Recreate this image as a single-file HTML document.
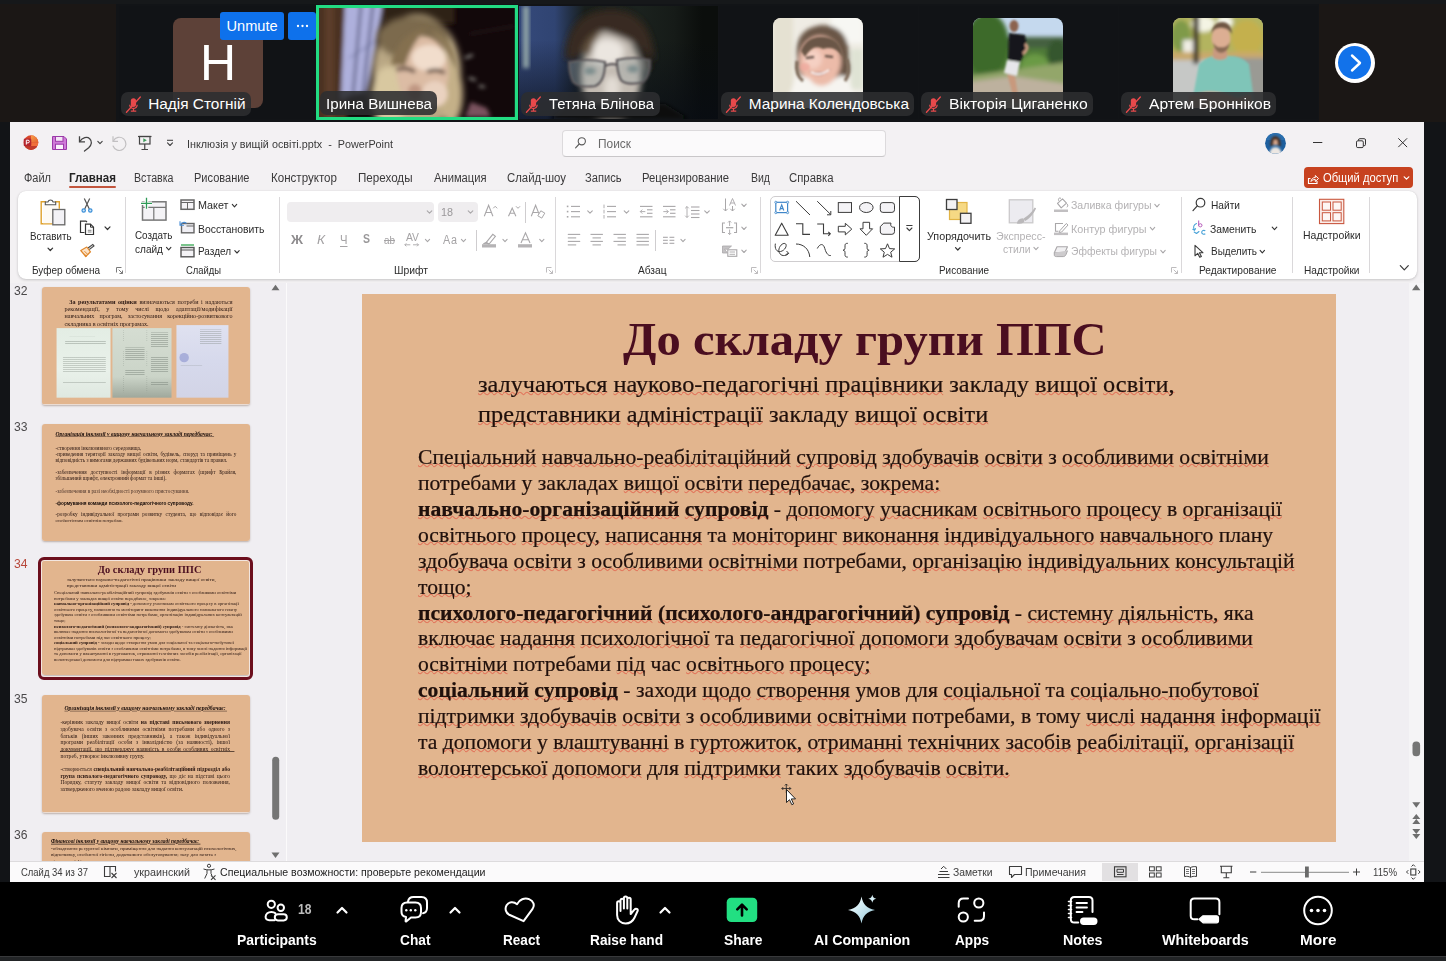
<!DOCTYPE html>
<html lang="uk"><head><meta charset="utf-8"><title>Zoom Meeting</title>
<style>
*{box-sizing:border-box;margin:0;padding:0}
html,body{width:1446px;height:961px;overflow:hidden;background:#121417}
body{position:relative;font-family:"Liberation Sans",sans-serif;color:#262626}
.abs,.L{position:absolute}
.L{white-space:pre;transform-origin:0 50%;line-height:1.2}
.serif{font-family:"Liberation Serif",serif}
svg{position:absolute;overflow:visible}
/* zoom strip */
#warmL{left:0;top:4px;width:116px;height:118px;background:#1b1715}
#warmR{left:1319px;top:4px;width:127px;height:118px;background:#1b1715}
.tile{position:absolute;top:6px;width:199px;height:113px;background:#111316;overflow:hidden}
.av{position:absolute;left:54.5px;top:11.5px;width:90px;height:90px;border-radius:8px;overflow:hidden}
.pill{position:absolute;height:24px;top:86px;border-radius:7px;background:rgba(44,46,48,.88)}
.nm{color:#fff;font-size:15.4px}
/* ppt */
#ppt{left:10px;top:121.5px;width:1414px;height:760px;background:#f3f1f3;overflow:hidden}
#ribbon{left:7.5px;top:69.5px;width:1399.5px;height:87.5px;background:#ffffff;border-radius:8px;box-shadow:0 1px 3px rgba(0,0,0,.18),0 0 1px rgba(0,0,0,.12)}
.gsep{position:absolute;top:77px;height:72px;width:1px;background:#dcdadc}
#work{left:0;top:161px;width:1414px;height:579px;background:#f0eef2}
#status{left:0;top:739.5px;width:1414px;height:20.5px;background:#fbfafb;border-top:1px solid #dddbdd}
/* slide */
.slide{position:absolute;background:#e2b58e;overflow:hidden}
.stitle{position:absolute;font-family:"Liberation Serif",serif;font-weight:700;color:#4a0e20;white-space:pre}
.stext{position:absolute;font-family:"Liberation Serif",serif;color:#20100c;white-space:pre;-webkit-text-stroke:.22px #20100c}
.stext b{font-weight:700}
u.w{text-decoration:underline wavy rgba(226,52,40,.5);text-decoration-thickness:.45px;text-underline-offset:-.6px;text-decoration-skip-ink:none}
/* toolbar */
#tb{left:0;top:881.5px;width:1446px;height:74px;background:#000}
#tbb{left:0;top:955.5px;width:1446px;height:5.5px;background:#222426;border-top:1px solid #38393b}
.tl{color:#fff;font-weight:700;font-size:14px}
svg.ph{overflow:hidden}
.th{position:absolute;left:31.500px;width:208.500px;height:117.300px;border-radius:3px;overflow:hidden;box-shadow:0 1px 2px rgba(90,60,40,.35)}
.tf{left:0;top:0;width:974px;height:548px;transform:scale(.21407);transform-origin:0 0}
.th .stext{color:#2a1712;-webkit-text-stroke:0}
.doc{overflow:hidden}
.doc i{position:absolute;display:block;height:8px;background:repeating-linear-gradient(180deg,#6b756c 0 3px,transparent 3px 9px);opacity:.3}
.stext.j .jl{display:block;text-align:justify;text-align-last:justify;white-space:normal}

</style></head>
<body>
<div class="abs" id="topband" style="left:0;top:0;width:1446px;height:4px;background:#16181a"></div>
<div class="abs" id="warmL"></div><div class="abs" id="warmR"></div>
<svg width="0" height="0" style="left:0;top:0"><defs>
<filter id="b1" x="-20%" y="-20%" width="140%" height="140%"><feGaussianBlur stdDeviation="1"/></filter>
<filter id="b2" x="-20%" y="-20%" width="140%" height="140%"><feGaussianBlur stdDeviation="2"/></filter>
<filter id="b3" x="-30%" y="-30%" width="160%" height="160%"><feGaussianBlur stdDeviation="3.2"/></filter>
<filter id="b5" x="-30%" y="-30%" width="160%" height="160%"><feGaussianBlur stdDeviation="5"/></filter>
<symbol id="mic" viewBox="0 0 17 18"><g fill="#e8494b"><rect x="6" y="2.200" width="5.400" height="9" rx="2.700"/><path d="M4.200 9h1.300c0 1.900 1.400 3.200 3.200 3.200s3.200-1.300 3.200-3.200h1.300c0 2.400-1.600 4.100-3.800 4.400v1.500h2.200v1.300H6v-1.300h2.100v-1.500C5.900 13.100 4.200 11.400 4.200 9z"/></g><path d="M1.500 16.800L15.800 1" stroke="#e8494b" stroke-width="1.400" stroke-linecap="round"/></symbol>
</defs></svg>
<!-- tile 1 : letter avatar -->
<div class="tile" style="left:118.5px">
  <div class="av" style="background:#5d4138"></div>
  <div class="abs" style="left:54.500px;top:11.500px;width:90px;height:90px;color:#fff;font-size:50px;line-height:90px;text-align:center">H</div>
  <div class="pill" style="left:2.5px;width:129.500px"></div>
  <svg style="left:6.500px;top:89.500px" width="16.500" height="17.500"><use href="#mic"/></svg>
</div>
<div class="abs" style="left:220px;top:12.200px;width:63.600px;height:27.800px;background:#0e71eb;border-radius:3px"></div>
<div class="abs" style="left:288px;top:12.200px;width:27.600px;height:27.800px;background:#0e71eb;border-radius:3px"></div>
<svg style="left:295.500px;top:23.700px" width="13" height="4" viewBox="0 0 13 4"><g fill="#fff"><circle cx="2" cy="2" r="1.150"/><circle cx="6.500" cy="2" r="1.150"/><circle cx="11" cy="2" r="1.150"/></g></svg>
<!-- tile 2 : active speaker video -->
<div class="tile" style="left:316px;top:4.800px;width:202.200px;height:115.400px;background:#22dc83">
 <svg class="ph" style="left:3.200px;top:3.200px" width="195.800" height="109" viewBox="0 0 196 109">
  <rect width="196" height="109" fill="#12080a"/>
  <g filter="url(#b2)">
   <rect x="-4" y="-4" width="32" height="120" fill="#4b3122"/>
   <rect x="6" y="-4" width="9" height="120" fill="#5b3d2a"/>
   <path d="M26 -4L68 -4L62 30L50 84L22 90Z" fill="#aeb0dc"/>
   <path d="M30 50L64 28" stroke="#8488b4" stroke-width="1.500"/>
   <path d="M42 -4L34 88M54 -4L44 86" stroke="#56587e" stroke-width="2.500"/>
   <path d="M66 -4L56 56L48 90" stroke="#3e302a" stroke-width="5"/>
   <rect x="66" y="-4" width="70" height="20" fill="#2e2018"/>
   <path d="M150 26L196 18" stroke="#3a2a2c" stroke-width="1"/>
  </g>
  <g filter="url(#b3)">
   <ellipse cx="98" cy="64" rx="44" ry="58" fill="#b9a784"/>
   <ellipse cx="94" cy="30" rx="36" ry="22" fill="#7c6a4e"/>
   <ellipse cx="70" cy="88" rx="18" ry="30" fill="#d8c8a0"/>
   <ellipse cx="132" cy="86" rx="12" ry="30" fill="#c4b088"/>
  </g>
  <g filter="url(#b2)">
   <ellipse cx="104" cy="64" rx="26" ry="36" fill="#dcbca4"/>
   <ellipse cx="110" cy="50" rx="17" ry="13" fill="#f1ddcc"/>
   <ellipse cx="116" cy="86" rx="13" ry="13" fill="#ead2c0"/>
   <path d="M78 62Q88 58 96 64M108 64Q118 60 126 65" stroke="#564236" stroke-width="3.500" fill="none"/>
   <ellipse cx="96" cy="84" rx="7" ry="8" fill="#bf9682"/>
   <path d="M72 56Q80 24 108 20Q92 36 86 58Z" fill="#84704f"/>
   <path d="M112 22Q136 30 138 62Q128 40 112 22Z" fill="#8e7a58"/>
   <path d="M146 109L152 94L168 100L172 109Z" fill="#7a525e"/>
   <path d="M146 50l8-3M150 70l7 2M160 78l6 1" stroke="#a8a8a0" stroke-width="2"/>
  </g>
 </svg>
 <div class="pill" style="left:4.300px;top:86.600px;width:116.700px"></div>
</div>
<!-- tile 3 : video -->
<div class="tile" style="left:518.5px;background:linear-gradient(180deg,rgba(8,12,20,0) 30%,rgba(8,12,20,.7) 100%),linear-gradient(90deg,#35497a 0%,#304472 18%,#222f44 26%,#191f1c 33%,#1b221e 60%,#161b18 78%,#0b0e0c 92%)">
 <svg class="ph" style="left:0;top:0" width="199" height="113" viewBox="0 0 199 113">
  <rect x="4" y="0" width="6" height="62" fill="#8fa3a6" filter="url(#b2)"/>
  <g filter="url(#b3)">
   <path d="M46 52Q48 4 92 3Q134 4 136 56Q120 36 86 24Q64 30 56 54Z" fill="#33271e"/>
   <ellipse cx="92" cy="70" rx="30" ry="46" fill="#c3bbb2"/>
   <ellipse cx="88" cy="46" rx="17" ry="13" fill="#ebe6e0"/>
   <ellipse cx="93" cy="82" rx="8" ry="12" fill="#e2dcd4"/>
   <path d="M48 50Q52 8 92 6Q130 8 134 52Q116 34 84 25Q64 30 60 52Z" fill="#372a20"/>
   <path d="M62 46Q68 28 84 24Q74 36 72 50Z" fill="#65523f"/>
   <path d="M118 40Q132 50 132 64L124 62Z" fill="#2c211a"/>
  </g>
  <g filter="url(#b1)" fill="none" stroke="#5a5558" stroke-width="2.200">
   <path d="M50 56Q68 52 86 56Q86 76 76 80Q60 82 54 76Q50 68 50 56Z" fill="rgba(160,172,172,.38)"/>
   <path d="M98 54Q116 50 131 54Q132 70 124 76Q108 80 102 74Q98 66 98 54Z" fill="rgba(160,172,172,.38)"/>
   <path d="M86 60Q92 57 98 59"/>
  </g>
  <g filter="url(#b2)"><ellipse cx="71" cy="65" rx="6" ry="3.500" fill="#78898a"/><ellipse cx="114" cy="63" rx="6" ry="3.500" fill="#78898a"/>
  <path d="M30 113L50 98L146 98L170 113Z" fill="#0e110f"/></g>
 </svg>
 <div class="pill" style="left:2.900px;width:138.600px"></div>
 <svg style="left:6.500px;top:89.500px" width="16.500" height="17.500"><use href="#mic"/></svg>
</div>
<!-- tile 4 -->
<div class="tile" style="left:718.5px">
 <div class="av"><svg class="ph" style="left:0;top:0" width="90" height="90" viewBox="0 0 90 90">
  <rect width="90" height="90" fill="#efece4"/>
  <g filter="url(#b2)" transform="translate(0,-9)">
   <rect x="0" y="0" width="20" height="110" fill="#e5e1d2"/><rect x="58" y="0" width="32" height="34" fill="#f7f7f3"/>
   <rect x="78" y="40" width="12" height="40" fill="#dfe3d4"/>
   <path d="M24 50Q20 20 48 16Q78 16 76 52Q80 66 70 70L30 68Q22 62 24 50Z" fill="#6a5646"/>
   <ellipse cx="47" cy="52" rx="21" ry="25" fill="#ecbba9"/>
   <ellipse cx="40" cy="50" rx="9" ry="10" fill="#f5d0c3"/>
   <path d="M10 104L22 70Q34 64 40 74Q52 82 62 70Q70 62 76 72L88 104Z" fill="#f6f4f0"/>
  </g>
  <g filter="url(#b1)" transform="translate(0,-9)"><path d="M28 42Q34 26 52 28Q68 30 70 48Q62 36 50 40Q40 34 32 48Z" fill="#6b5746"/>
   <path d="M24 52Q22 66 30 72M74 50Q78 64 72 72" stroke="#7a6655" stroke-width="3" fill="none"/>
   <path d="M36 62Q46 72 58 60Q46 66 36 62Z" fill="#a45c56"/><path d="M38 63Q46 68 56 61" stroke="#fff" stroke-width="1.600" fill="none"/>
   <path d="M33 49l8-1M52 47l8 1" stroke="#54423a" stroke-width="2.200"/>
   <ellipse cx="32" cy="58" rx="5" ry="4" fill="#f0a89c" opacity=".7"/></g>
 </svg></div>
 <div class="pill" style="left:2.100px;width:193.300px"></div>
 <svg style="left:6.500px;top:89.500px" width="16.500" height="17.500"><use href="#mic"/></svg>
</div>
<!-- tile 5 -->
<div class="tile" style="left:918.5px">
 <div class="av"><svg class="ph" style="left:0;top:0" width="90" height="90" viewBox="0 0 90 90">
  <rect width="90" height="90" fill="#c5d9ee"/>
  <g filter="url(#b2)">
   <rect x="-4" y="19" width="98" height="14" fill="#44603f"/>
   <rect x="-4" y="30" width="98" height="30" fill="#4f7a37"/>
   <ellipse cx="14" cy="26" rx="22" ry="32" fill="#3c6a2b"/>
   <ellipse cx="62" cy="48" rx="14" ry="12" fill="#6b9a45"/>
   <ellipse cx="84" cy="36" rx="10" ry="14" fill="#36572f"/>
   <path d="M-4 58L94 44L94 94L-4 94Z" fill="#93a66b"/>
   <path d="M-4 64L40 58L94 66L94 94L-4 94Z" fill="#bdb19e"/>
  </g>
  <g filter="url(#b1)">
   <ellipse cx="41" cy="8" rx="4.500" ry="6" fill="#8c6450"/>
   <path d="M36 15L52 17L54 30L47 44L35 42Z" fill="#13141a"/>
   <path d="M52 26Q57 30 50 36" stroke="#c8997f" stroke-width="3" fill="none"/>
   <path d="M34 42L47 44L44 58L31 55Z" fill="#e6e6ea"/>
   <path d="M34 56L42 58L46 84L41 84L38 70Z" fill="#c8997d"/>
  </g>
 </svg></div>
 <div class="pill" style="left:2.100px;width:172.400px"></div>
 <svg style="left:6.500px;top:89.500px" width="16.500" height="17.500"><use href="#mic"/></svg>
</div>
<!-- tile 6 -->
<div class="tile" style="left:1118.5px">
 <div class="av"><svg class="ph" style="left:0;top:0" width="90" height="90" viewBox="0 0 90 90">
  <rect width="90" height="90" fill="#c6c9a0"/>
  <g filter="url(#b2)">
   <rect x="-4" y="-4" width="98" height="40" fill="#b3b45e"/>
   <ellipse cx="30" cy="6" rx="12" ry="8" fill="#f4f4e4"/><ellipse cx="52" cy="4" rx="8" ry="6" fill="#f8f8ee"/>
   <ellipse cx="74" cy="20" rx="16" ry="18" fill="#c4b04e"/><ellipse cx="8" cy="18" rx="10" ry="16" fill="#7f9a48"/>
   <rect x="10" y="22" width="14" height="12" fill="#f0eee4"/>
   <rect x="-4" y="34" width="98" height="8" fill="#c9a96c"/>
   <rect x="-4" y="42" width="40" height="52" fill="#c6c8c6"/>
   <rect x="60" y="40" width="34" height="54" fill="#9a9a94"/>
   <rect x="20" y="-4" width="6" height="50" fill="#3f372b"/>
  </g>
  <g filter="url(#b1)">
   <path d="M18 90L26 46Q36 36 48 38Q68 36 76 46L82 90Z" fill="#7fc5b8"/>
   <path d="M40 30h14v10q-7 4-14 0z" fill="#c99a80"/>
   <ellipse cx="48" cy="20" rx="9.500" ry="12" fill="#dcae93"/>
   <path d="M38 16Q40 4 49 4Q58 4 59 16Q54 9 48 10Q42 9 38 16Z" fill="#6f5744"/>
   <path d="M40 24Q42 35 48 35Q55 35 57 24Q54 30 48 29Q43 30 40 24Z" fill="#8a6a54"/>
   <path d="M16 78Q40 68 64 80L78 76L80 90L16 90Z" fill="#d5a88e"/>
  </g>
 </svg></div>
 <div class="pill" style="left:2.100px;width:155.200px"></div>
 <svg style="left:6.500px;top:89.500px" width="16.500" height="17.500"><use href="#mic"/></svg>
</div>
<!-- next page arrow -->
<div class="abs" style="left:1334.700px;top:42.500px;width:40px;height:40px;border-radius:50%;background:#fff"></div>
<div class="abs" style="left:1338.200px;top:46px;width:33px;height:33px;border-radius:50%;background:#1272ea"></div>
<svg style="left:1349.500px;top:53.500px" width="12" height="18" viewBox="0 0 12 18"><path d="M2 1.500L10 9L2 16.500" fill="none" stroke="#fff" stroke-width="2.400" stroke-linecap="round" stroke-linejoin="round"/></svg>

<div class="abs" id="ppt">
  <div class="abs" id="work"></div>
  <div class="abs" id="ribbon"></div>
  <div class="abs" id="tpane" style="left:0;top:161.500px;width:276px;height:578.800px;overflow:hidden">
 <!-- coordinates inside: pane-relative; thumb x = 31.5 -->
 <div class="th" style="top:4.400px"><div class="slide tf">
   <div class="stext" style="left:105px;top:52px;width:785px;font-size:28.500px;line-height:34.500px;white-space:normal;text-align:justify;text-indent:22px"><b>За результатами оцінки</b> визначаються потреби і надаються рекомендації, у тому числі щодо адаптації/модифікації навчальних програм, застосування корекційно-розвиткового складника в освітніх програмах.</div>
   <div class="abs doc" style="left:68px;top:192px;width:252px;height:325px;background:linear-gradient(180deg,#e3ede4,#e9f1ea 60%,#dfe8e0)"><i style="left:60px;top:30px;width:120px"></i><i style="left:40px;top:60px;width:190px;height:24px;opacity:.35"></i><i style="left:30px;top:110px;width:200px;height:150px;opacity:.3"></i></div>
   <div class="abs doc" style="left:329px;top:192px;width:276px;height:325px;background:linear-gradient(180deg,#d5ddd2,#cbd4c8 70%,#9fa89c)"><i style="left:180px;top:20px;width:80px;height:250px;opacity:.4"></i><i style="left:60px;top:90px;width:90px;height:130px;opacity:.4"></i><i style="left:50px;top:10px;width:2px;height:290px;opacity:.5"></i><i style="left:160px;top:10px;width:2px;height:290px;opacity:.5"></i></div>
   <div class="abs doc" style="left:628px;top:178px;width:243px;height:339px;background:linear-gradient(180deg,#dfe1f0,#d6d9ec 50%,#d2d4e6)"><i style="left:110px;top:20px;width:100px;height:70px;opacity:.3"></i><i style="left:14px;top:130px;width:44px;height:44px;border-radius:50%;background:#7a84c8;opacity:.5"></i><i style="left:20px;top:186px;width:100px;height:3px;opacity:.3"></i></div>
 </div></div>
 <div class="th" style="top:140.500px"><div class="slide tf">
   <div class="stext" style="left:63px;top:30px;font-size:25px;line-height:34px;font-style:italic;font-weight:700;text-decoration:underline;color:#1a0d0a;transform:scaleX(1.045);transform-origin:0 0">Організація інклюзії у вищому навчальному закладі передбачає: </div>
   <div class="stext j" style="left:63px;top:99px;width:845px;font-size:24.500px;line-height:27.500px">-створення інклюзивного середовища,<br><span class="jl">-приведення території закладу вищої освіти, будівель, споруд та приміщень у</span><span style="font-size:24.300px">відповідність з вимогами державних будівельних норм, стандартів та правил.</span></div>
   <div class="stext j" style="left:63px;top:211px;width:845px;font-size:24.500px;line-height:27.500px"><span class="jl">-забезпечення доступності інформації в різних форматах (шрифт Брайля,</span>збільшений шрифт, електронний формат та інші).</div>
   <div class="stext" style="left:63px;top:298px;font-size:24.300px;line-height:27px;color:#4a332a">-забезпечення в разі необхідності розумного пристосування.</div>
   <div class="stext" style="left:63px;top:356px;font-size:21.800px;line-height:28px;font-weight:700;font-family:'Liberation Sans',sans-serif;color:#120806">-формування команди психолого-педагогічного супроводу.</div>
   <div class="stext j" style="left:63px;top:411px;width:845px;font-size:24.500px;line-height:26.500px"><span class="jl">-розробку індивідуальної програми розвитку студента, що відповідає його</span><span style="font-size:22.200px">особистісним освітнім потребам.</span></div>
 </div></div>
 <div class="th sel" style="top:274.500px"><div class="slide tf"><div class="stitle" style="left:260.5px;top:22.6px;font-size:46.6px;line-height:58px;transform:scaleX(1.043);transform-origin:0 0">До складу групи ППС</div><div class="stext" style="left:116px;top:85px;font-size:23.4px;line-height:29.2px;transform:scaleX(1.0385);transform-origin:0 0">залучаються науково-педагогічні працівники закладу вищої освіти,<br>представники адміністрації закладу вищої освіти</div><div class="stext" style="left:56px;top:150.6px;font-size:20.85px;line-height:25.93px;transform:scaleX(1.0384);transform-origin:0 0">Спеціальний навчально-реабілітаційний супровід здобувачів освіти з особливими освітніми<br>потребами у закладах вищої освіти передбачає, зокрема:<br><b>навчально-організаційний супровід</b> - допомогу учасникам освітнього процесу в організації<br>освітнього процесу, написання та моніторинг виконання індивідуального навчального плану<br>здобувача освіти з особливими освітніми потребами, організацію індивідуальних консультацій<br>тощо;<br><b>психолого-педагогічний (психолого-андрагогічний) супровід</b> - системну діяльність, яка<br>включає надання психологічної та педагогічної допомоги здобувачам освіти з особливими<br>освітніми потребами під час освітнього процесу;<br><b>соціальний супровід</b> - заходи щодо створення умов для соціальної та соціально-побутової<br>підтримки здобувачів освіти з особливими освітніми потребами, в тому числі надання інформації<br>та допомоги у влаштуванні в гуртожиток, отриманні технічних засобів реабілітації, організації<br>волонтерської допомоги для підтримки таких здобувачів освіти.</div></div></div>
 <div class="abs" style="left:28.400px;top:274px;width:214.300px;height:123px;border:3px solid #6c0e1d;border-radius:6px;box-shadow:inset 0 0 0 1px #f3e6e0"></div>
 <div class="th" style="top:412.400px"><div class="slide tf">
   <div class="stext" style="left:105px;top:47px;font-size:26px;line-height:34px;font-style:italic;font-weight:700;text-decoration:underline;color:#1a0d0a;transform:scaleX(1.03);transform-origin:0 0">Організація інклюзії у вищому навчальному закладі передбачає: </div>
   <div class="stext" style="left:86px;top:112px;width:792px;font-size:26px;line-height:31.400px;white-space:normal;text-align:justify">-керівник закладу вищої освіти <b>на підставі письмового звернення</b> здобувача освіти з особливими освітніми потребами або одного з батьків (інших законних представників), а також індивідуальної програми реабілітації особи з інвалідністю (за наявності), іншої документації, що підтверджує наявність в особи особливих освітніх потреб, утворює інклюзивну групу.</div>
   <div class="abs" style="left:84px;top:262px;width:815px;height:2.500px;background:#1a0d0a"></div>
   <div class="stext" style="left:86px;top:331px;width:792px;font-size:26px;line-height:31px;white-space:normal;text-align:justify">-створюється <b>спеціальний навчально-реабілітаційний підрозділ або група психолого-педагогічного супроводу,</b> що діє на підставі цього Порядку, статуту закладу вищої освіти та відповідного положення, затвердженого вченою радою закладу вищої освіти.</div>
 </div></div>
 <div class="th" style="top:548.700px"><div class="slide tf">
   <div class="stext" style="left:42px;top:28px;font-size:24px;line-height:34px;font-style:italic;font-weight:700;text-decoration:underline;text-decoration-thickness:2.500px;color:#1a0d0a;transform:scaleX(1.055);transform-origin:0 0">Фінансові інклюзії у вищому навчальному закладі передбачає: </div>
   <div class="stext" style="left:42px;top:63px;font-size:23.500px;line-height:29.300px;transform:scaleX(1);transform-origin:0 0">-обладнання ресурсної кімнати, приміщення для надання консультацій психологічних,<br>відпочинку, особистої гігієни, додаткового обслуговування; залу для занять з<br>лікувальної фізкультури …</div>
 </div></div>
</div>

  <div class="slide" id="mainslide" style="left:352px;top:172.8px;width:974px;height:548px"><div class="stitle" style="left:260.5px;top:15.6px;font-size:46.6px;line-height:58px;transform:scaleX(1.043);transform-origin:0 0">До складу групи ППС</div><div class="stext" style="left:116px;top:76px;font-size:23.4px;line-height:29.2px;transform:scaleX(1.0385);transform-origin:0 0"><u class="w">залучаються</u> <u class="w">науково-педагогічні</u> <u class="w">працівники</u> закладу <u class="w">вищої</u> <u class="w">освіти,</u><br><u class="w">представники</u> <u class="w">адміністрації</u> закладу <u class="w">вищої</u> <u class="w">освіти</u></div><div class="stext" style="left:56px;top:150.6px;font-size:20.85px;line-height:25.93px;transform:scaleX(1.0384);transform-origin:0 0"><u class="w">Спеціальний</u> <u class="w">навчально-реабілітаційний</u> <u class="w">супровід</u> <u class="w">здобувачів</u> <u class="w">освіти</u> з <u class="w">особливими</u> <u class="w">освітніми</u><br>потребами у закладах <u class="w">вищої</u> <u class="w">освіти</u> <u class="w">передбачає,</u> <u class="w">зокрема:</u><br><b><u class="w">навчально-організаційний</u> <u class="w">супровід</u></b> - <u class="w">допомогу</u> <u class="w">учасникам</u> <u class="w">освітнього</u> <u class="w">процесу</u> в <u class="w">організації</u><br><u class="w">освітнього</u> <u class="w">процесу,</u> <u class="w">написання</u> та <u class="w">моніторинг</u> <u class="w">виконання</u> <u class="w">індивідуального</u> <u class="w">навчального</u> плану<br><u class="w">здобувача</u> <u class="w">освіти</u> з <u class="w">особливими</u> <u class="w">освітніми</u> потребами, <u class="w">організацію</u> <u class="w">індивідуальних</u> <u class="w">консультацій</u><br><u class="w">тощо;</u><br><b><u class="w">психолого-педагогічний</u> <u class="w">(психолого-андрагогічний)</u> <u class="w">супровід</u></b> - <u class="w">системну</u> <u class="w">діяльність,</u> яка<br><u class="w">включає</u> <u class="w">надання</u> <u class="w">психологічної</u> та <u class="w">педагогічної</u> <u class="w">допомоги</u> <u class="w">здобувачам</u> <u class="w">освіти</u> з <u class="w">особливими</u><br><u class="w">освітніми</u> потребами <u class="w">під</u> час <u class="w">освітнього</u> <u class="w">процесу;</u><br><b><u class="w">соціальний</u> <u class="w">супровід</u></b> - заходи <u class="w">щодо</u> <u class="w">створення</u> умов для <u class="w">соціальної</u> та <u class="w">соціально-побутової</u><br><u class="w">підтримки</u> <u class="w">здобувачів</u> <u class="w">освіти</u> з <u class="w">особливими</u> <u class="w">освітніми</u> потребами, в тому <u class="w">числі</u> <u class="w">надання</u> <u class="w">інформації</u><br>та <u class="w">допомоги</u> у <u class="w">влаштуванні</u> в <u class="w">гуртожиток,</u> <u class="w">отриманні</u> <u class="w">технічних</u> <u class="w">засобів</u> <u class="w">реабілітації,</u> <u class="w">організації</u><br><u class="w">волонтерської</u> <u class="w">допомоги</u> для <u class="w">підтримки</u> таких <u class="w">здобувачів</u> <u class="w">освіти.</u></div></div>
  <div class="abs" id="status"></div>
</div>
<div class="abs" style="left:561.6px;top:129.5px;width:324.7px;height:27.6px;background:#fbfafb;border:1px solid #dcdadc;border-bottom-color:#c9c7c9;border-radius:4px"></div>
<div class="abs" style="left:1304px;top:167.4px;width:109.100px;height:20.5px;background:#c7421f;border-radius:4px"></div>
<div class="abs" style="left:69px;top:186px;width:47px;height:2.2px;border-radius:1px;background:#c2553d"></div>
<div class="abs" style="left:287.400px;top:201.5px;width:147px;height:20.8px;background:#efedef;border-radius:4px"></div>
<div class="abs" style="left:437.800px;top:201.5px;width:39.800px;height:20.8px;background:#efedef;border-radius:4px"></div>
<div class="abs" style="left:769.5px;top:196.200px;width:150.300px;height:65.5px;border:1px solid #cfcdcf;border-radius:5px;background:#ffffff"></div>
<div class="abs" style="left:899.300px;top:196.200px;width:20.5px;height:65.5px;border:1.2px solid #3c3c3c;border-radius:0 5px 5px 0"></div>
<div class="abs" style="left:1102.400px;top:863px;width:35.200px;height:18px;background:#e2e0e2"></div>
<div class="abs" style="left:125.1px;top:197px;width:1px;height:76px;background:#dad8da"></div>
<div class="abs" style="left:279.3px;top:197px;width:1px;height:76px;background:#dad8da"></div>
<div class="abs" style="left:555.0px;top:197px;width:1px;height:76px;background:#dad8da"></div>
<div class="abs" style="left:760.2px;top:197px;width:1px;height:76px;background:#dad8da"></div>
<div class="abs" style="left:1181.2px;top:197px;width:1px;height:76px;background:#dad8da"></div>
<div class="abs" style="left:1292.3px;top:197px;width:1px;height:76px;background:#dad8da"></div>
<div class="abs" style="left:1368.8px;top:197px;width:1px;height:76px;background:#dad8da"></div>
<div class="abs" style="left:525.0px;top:201.6px;width:1px;height:21.0px;background:#cfcdcf"></div>
<div class="abs" style="left:476.0px;top:230px;width:1px;height:21px;background:#cfcdcf"></div>
<div class="abs" style="left:654.9px;top:230px;width:1px;height:21px;background:#cfcdcf"></div>
<div class="abs" style="left:1409px;top:283px;width:15px;height:578px;background:#f5f4f6"></div>
<div class="abs" style="left:286px;top:283px;width:1px;height:578px;background:#fbfafb"></div>
<svg style="left:0;top:0" width="1446" height="961" viewBox="0 0 1446 961">
<defs><linearGradient id="pl" x1="0" y1="0" x2="1" y2="1"><stop offset="0" stop-color="#f9a24c"/><stop offset="1" stop-color="#e05a2a"/></linearGradient><clipPath id="pc"><circle cx="31" cy="142.600" r="7.300"/></clipPath></defs>
<g clip-path="url(#pc)"><rect x="23" y="135" width="16" height="16" fill="#d9482a"/><path d="M31 135h9v7.600h-9z" fill="url(#pl)"/><path d="M31 142.600h9v3.500h-9z" fill="#f0703a"/><path d="M23 146h16v5H23z" fill="#c13b2a"/></g>
<rect x="23.700" y="138.600" width="7.600" height="7.600" rx="1.300" fill="#b5262d"/><path d="M26.300 144.600v-4.400h1.700a1.350 1.350 0 010 2.700h-1.700" fill="none" stroke="#fff" stroke-width="1"/>
<path d="M52.500 136.500h11.500l2.500 2.500v10.500h-14z" fill="#cf7bd8" stroke="#9b3aa8" stroke-width="1"/><rect x="55.500" y="136.500" width="7.500" height="4.800" fill="#f4e6f6" stroke="#9b3aa8" stroke-width="1"/><rect x="55.500" y="144.200" width="8" height="5.300" fill="#fbf4fc" stroke="#9b3aa8" stroke-width="1"/>
<path d="M79.500 136.300v5.500h5.500" fill="none" stroke="#444" stroke-width="1.300"/><path d="M79.800 141.500c2.600-4 7.300-5.200 9.900-2.800 2.600 2.400 2.200 6-1 9l-4.200 3.300" fill="none" stroke="#444" stroke-width="1.300" stroke-linecap="round"/>
<path d="M97.8 141.3L100.0 143.7L102.2 141.3" fill="none" stroke="#444" stroke-width="1.1" stroke-linecap="round" stroke-linejoin="round"/>
<path d="M113 136.300v5h5" fill="none" stroke="#c2c0c2" stroke-width="1.200"/><path d="M113.400 141a6.600 6.600 0 11-.3 5" fill="none" stroke="#c2c0c2" stroke-width="1.200" stroke-linecap="round"/>
<path d="M138 136.500h13.500" stroke="#444" stroke-width="1.200"/><rect x="139.500" y="136.500" width="10.500" height="7.500" fill="none" stroke="#444" stroke-width="1.200"/><path d="M144.750 144v5.200M141.500 149.500h6.500" stroke="#444" stroke-width="1.200"/><path d="M143.300 138.300l3.500 2-3.500 2z" fill="#3f9b5c"/>
<path d="M167 140.300h6" stroke="#444" stroke-width="1.100"/>
<path d="M167.5 142.9L170.0 145.5L172.5 142.9" fill="none" stroke="#444" stroke-width="1.1" stroke-linecap="round" stroke-linejoin="round"/>
<circle cx="581.800" cy="141.300" r="3.600" fill="none" stroke="#5a5a5a" stroke-width="1.100"/><path d="M579.200 144l-3.600 3.800" stroke="#5a5a5a" stroke-width="1.100" stroke-linecap="round"/>
<defs><clipPath id="ac"><circle cx="1275.500" cy="143.300" r="10.400"/></clipPath></defs><g clip-path="url(#ac)"><rect x="1265" y="132" width="22" height="23" fill="#1d5f9e"/><rect x="1265" y="132" width="22" height="8" fill="#2a6fae"/><g filter="url(#b1)"><ellipse cx="1275.500" cy="141" rx="3.400" ry="4.200" fill="#d9a98e"/><path d="M1271 139q4-6 9 0l1 7h-3l-1-6h-3l-1 6h-3z" fill="#4a3326"/><path d="M1269 155q1-8 6.500-8t6.500 8z" fill="#ece7e2"/></g></g>
<path d="M1313 142.500h9.300" stroke="#333" stroke-width="1"/>
<rect x="1356.500" y="140.800" width="6.800" height="6.800" rx="1.300" fill="none" stroke="#333" stroke-width="1"/><path d="M1358.500 140.500v-.5a1.300 1.300 0 011.300-1.300h4.400a1.300 1.300 0 011.300 1.300v4.400a1.300 1.300 0 01-1.300 1.300h-.6" fill="none" stroke="#333" stroke-width="1"/>
<path d="M1398.300 138.300l8.800 8.800M1407.100 138.300l-8.800 8.800" stroke="#333" stroke-width="1"/>
<path d="M1310.500 178.500h-2v5h8.500v-2.500" fill="none" stroke="#fff" stroke-width="1.100"/><path d="M1311 181.500c.3-2.600 2-4 4.300-4v-2l3.200 3-3.200 3v-2c-2 0-3.300.6-4.300 2z" fill="none" stroke="#fff" stroke-width="1" stroke-linejoin="round"/>
<path d="M1404.2 176.8L1406.5 179.2L1408.8 176.8" fill="none" stroke="#fff" stroke-width="1.2" stroke-linecap="round" stroke-linejoin="round"/>
<path d="M46 201.800h-4.800v22h11" fill="none" stroke="#dfa22e" stroke-width="1.400"/><path d="M55 201.800h4.300v7" fill="none" stroke="#dfa22e" stroke-width="1.400"/><path d="M43 203.500h14.500v20H43z" fill="#fbf7ee" opacity=".6"/><path d="M45.300 204.800v-2.800h2.600a2.700 2.700 0 015.200 0h2.600v2.800z" fill="#ffffff" stroke="#555" stroke-width="1.100"/><rect x="52.800" y="209.500" width="12" height="15.300" fill="#f3f2f6" stroke="#666" stroke-width="1.300"/>
<path d="M48.0 248.1L50.3 250.5L52.6 248.1" fill="none" stroke="#333" stroke-width="1.2" stroke-linecap="round" stroke-linejoin="round"/>
<path d="M84.300 198.500l5 10.500M89.700 198.500l-5 10.500" stroke="#555" stroke-width="1.200"/><circle cx="83.700" cy="210.500" r="1.700" fill="#cfe6f8" stroke="#3b8fd8" stroke-width="1.200"/><circle cx="90.300" cy="210.500" r="1.700" fill="#cfe6f8" stroke="#3b8fd8" stroke-width="1.200"/>
<path d="M84.500 232.500h-4v-11.300h5.500l1 1" fill="none" stroke="#333" stroke-width="1.200"/><path d="M85.500 224.200h5l3 3v7.300h-8z" fill="#ffffff" stroke="#333" stroke-width="1.200"/><path d="M90.500 224.200v3h3" fill="none" stroke="#333" stroke-width="1"/><path d="M87.800 230.300h3.700M87.800 232h3.700" stroke="#777" stroke-width=".9"/>
<path d="M105.0 226.9L107.5 229.5L110.0 226.9" fill="none" stroke="#333" stroke-width="1.2" stroke-linecap="round" stroke-linejoin="round"/>
<path d="M88 248l4.800-3.600 1.200 1.600-4.800 3.600" fill="#ddd" stroke="#444" stroke-width="1.100"/><path d="M80.800 250.500l6-3.500 3.700 4.800-4.800 4.700z" fill="#fbe3c8" stroke="#e0882e" stroke-width="1.200" stroke-linejoin="round"/><path d="M82.500 252.500l4.500 4M84.500 251.200l3.500 3.500" stroke="#e0882e" stroke-width="1"/>
<path d="M116.5 272.5V267.5H121.5" fill="none" stroke="#7a7a7a" stroke-width="1"/><path d="M118.7 269.7L122.5 273.5M122.5 270.5V273.5H119.5" fill="none" stroke="#7a7a7a" stroke-width="1"/>
<rect x="142.500" y="201.800" width="23.500" height="18.300" fill="#f4f3f6" stroke="#777" stroke-width="1.500"/><path d="M142.500 207.300h23.500M153.800 207.300v12.800" stroke="#777" stroke-width="1.200"/><path d="M141 203.300h11M146.500 197.800v11" stroke="#ffffff" stroke-width="3.600"/><path d="M141 203.300h11M146.500 197.800v11" stroke="#2f9a57" stroke-width="1.300"/>
<path d="M166.5 247.4L168.7 249.8L170.9 247.4" fill="none" stroke="#333" stroke-width="1.1" stroke-linecap="round" stroke-linejoin="round"/>
<rect x="181" y="200" width="13" height="9.300" fill="#f4f3f6" stroke="#666" stroke-width="1.500"/><path d="M181 202.500h13M187.500 202.500v6.800" stroke="#666" stroke-width="1"/>
<path d="M232.3 204.4L234.5 206.8L236.7 204.4" fill="none" stroke="#333" stroke-width="1.1" stroke-linecap="round" stroke-linejoin="round"/>
<rect x="181.500" y="223.500" width="12.500" height="9.300" fill="#f0eff4" stroke="#666" stroke-width="1.400"/><path d="M186.500 226h7.500" stroke="#666" stroke-width="1"/><path d="M180 221.200v4h4" fill="none" stroke="#4a90d9" stroke-width="1.100"/><path d="M180.300 225c1.200-2.600 4.200-3.400 6.200-1.600" fill="none" stroke="#4a90d9" stroke-width="1.100"/>
<path d="M181 245h13" stroke="#6cbf80" stroke-width="1.800"/><rect x="181" y="247.500" width="13" height="9.300" fill="#f4f3f6" stroke="#555" stroke-width="1.400"/><path d="M181 250h13" stroke="#555" stroke-width="1"/>
<path d="M234.8 250.7L237.0 253.0L239.2 250.7" fill="none" stroke="#333" stroke-width="1.1" stroke-linecap="round" stroke-linejoin="round"/>
<path d="M427.2 210.8L429.5 213.2L431.8 210.8" fill="none" stroke="#a9a7a9" stroke-width="1.1" stroke-linecap="round" stroke-linejoin="round"/>
<path d="M468.2 210.8L470.5 213.2L472.8 210.8" fill="none" stroke="#a9a7a9" stroke-width="1.1" stroke-linecap="round" stroke-linejoin="round"/>
<path d="M484.300 216.300l4.300-11 4.300 11M485.800 212.500h5.600" fill="none" stroke="#a9a7a9" stroke-width="1.100"/><path d="M493.200 208.300l2-2 2 2" fill="none" stroke="#a9a7a9" stroke-width="1"/>
<path d="M508.500 216.300l3.700-8.300 3.700 8.300M509.800 213.300h4.800" fill="none" stroke="#a9a7a9" stroke-width="1.100"/><path d="M516 206.300l2 2 2-2" fill="none" stroke="#a9a7a9" stroke-width="1"/>
<path d="M531.300 216.300l4.300-11 3.300 8.300M532.800 212.500h5" fill="none" stroke="#a9a7a9" stroke-width="1.100"/><path d="M540.800 210.800l4 2.300-3 5-4-2.300z" fill="#ffffff" stroke="#a9a7a9" stroke-width="1"/>
<path d="M404.800 244.800h5.500M413 244.800h5.500M406.300 243.300l-1.500 1.500 1.500 1.500M417 243.300l1.500 1.500-1.500 1.500" fill="none" stroke="#a9a7a9" stroke-width=".9"/>
<path d="M425.4 239.4L427.5 241.6L429.6 239.4" fill="none" stroke="#a9a7a9" stroke-width="1.1" stroke-linecap="round" stroke-linejoin="round"/>
<path d="M461.4 239.4L463.5 241.6L465.6 239.4" fill="none" stroke="#a9a7a9" stroke-width="1.1" stroke-linecap="round" stroke-linejoin="round"/>
<path d="M486.300 242.300l6.500-8 2.600 2-6.500 8z" fill="none" stroke="#a9a7a9" stroke-width="1.100"/><path d="M486.300 242.300l-2.800 1.300h5.500" fill="none" stroke="#a9a7a9" stroke-width="1"/><rect x="482" y="244.200" width="14" height="3.300" fill="#b5b3b5"/>
<path d="M502.9 239.4L505.0 241.6L507.1 239.4" fill="none" stroke="#a9a7a9" stroke-width="1.1" stroke-linecap="round" stroke-linejoin="round"/>
<path d="M521 243l4.500-10.200 4.500 10.200M522.600 239.800h5.800" fill="none" stroke="#a9a7a9" stroke-width="1.100"/><rect x="518" y="244.200" width="14" height="3.300" fill="#b5b3b5"/>
<path d="M539.7 239.4L541.8 241.6L543.9 239.4" fill="none" stroke="#a9a7a9" stroke-width="1.1" stroke-linecap="round" stroke-linejoin="round"/>
<path d="M546.5 272.5V267.5H551.5" fill="none" stroke="#bdbbbd" stroke-width="1"/><path d="M548.7 269.7L552.5 273.5M552.5 270.5V273.5H549.5" fill="none" stroke="#bdbbbd" stroke-width="1"/>
<rect x="566.800" y="205.6" width="1.600" height="1.600" fill="#a9a7a9"/>
<path d="M571 206.4H580" stroke="#a9a7a9" stroke-width="1.1"/>
<rect x="566.800" y="210.79999999999998" width="1.600" height="1.600" fill="#a9a7a9"/>
<path d="M571 211.6H580" stroke="#a9a7a9" stroke-width="1.1"/>
<rect x="566.800" y="216.0" width="1.600" height="1.600" fill="#a9a7a9"/>
<path d="M571 216.8H580" stroke="#a9a7a9" stroke-width="1.1"/>
<path d="M587.7 210.8L590.0 213.2L592.3 210.8" fill="none" stroke="#a9a7a9" stroke-width="1.1" stroke-linecap="round" stroke-linejoin="round"/>
<path d="M604 204.6v3.600" stroke="#a9a7a9" stroke-width=".9"/>
<path d="M607 206.4H616" stroke="#a9a7a9" stroke-width="1.1"/>
<path d="M604 209.79999999999998v3.600" stroke="#a9a7a9" stroke-width=".9"/>
<path d="M607 211.6H616" stroke="#a9a7a9" stroke-width="1.1"/>
<path d="M604 215.0v3.600" stroke="#a9a7a9" stroke-width=".9"/>
<path d="M607 216.8H616" stroke="#a9a7a9" stroke-width="1.1"/>
<path d="M624.2 210.8L626.5 213.2L628.8 210.8" fill="none" stroke="#a9a7a9" stroke-width="1.1" stroke-linecap="round" stroke-linejoin="round"/>
<path d="M640 206.4H652.5" stroke="#a9a7a9" stroke-width="1.1"/>
<path d="M640 216.8H652.5" stroke="#a9a7a9" stroke-width="1.1"/>
<path d="M647 209.8H652.5" stroke="#a9a7a9" stroke-width="1.1"/>
<path d="M647 213.3H652.5" stroke="#a9a7a9" stroke-width="1.1"/>
<path d="M640.300 211.600h5M642.300 209.600l-2 2 2 2" fill="none" stroke="#a9a7a9" stroke-width=".9"/>
<path d="M663 206.4H675.5" stroke="#a9a7a9" stroke-width="1.1"/>
<path d="M663 216.8H675.5" stroke="#a9a7a9" stroke-width="1.1"/>
<path d="M670 209.8H675.5" stroke="#a9a7a9" stroke-width="1.1"/>
<path d="M670 213.3H675.5" stroke="#a9a7a9" stroke-width="1.1"/>
<path d="M663.300 211.600h5M666.300 209.600l2 2-2 2" fill="none" stroke="#a9a7a9" stroke-width=".9"/>
<path d="M687 206.500v11M685.200 208.300l1.800-1.800 1.800 1.800M685.200 215.700l1.800 1.800 1.800-1.800" fill="none" stroke="#a9a7a9" stroke-width=".9"/>
<path d="M691 207H699.5" stroke="#a9a7a9" stroke-width="1.1"/>
<path d="M691 210.5H699.5" stroke="#a9a7a9" stroke-width="1.1"/>
<path d="M691 214H699.5" stroke="#a9a7a9" stroke-width="1.1"/>
<path d="M691 217.5H699.5" stroke="#a9a7a9" stroke-width="1.1"/>
<path d="M704.7 210.8L707.0 213.2L709.3 210.8" fill="none" stroke="#a9a7a9" stroke-width="1.1" stroke-linecap="round" stroke-linejoin="round"/>
<path d="M567.8 234.4H580.2" stroke="#a9a7a9" stroke-width="1.1"/>
<path d="M567.8 237.9H576.2" stroke="#a9a7a9" stroke-width="1.1"/>
<path d="M567.8 241.4H580.2" stroke="#a9a7a9" stroke-width="1.1"/>
<path d="M567.8 244.9H576.2" stroke="#a9a7a9" stroke-width="1.1"/>
<path d="M590.5 234.4H602.9" stroke="#a9a7a9" stroke-width="1.1"/>
<path d="M592.5 237.9H600.9" stroke="#a9a7a9" stroke-width="1.1"/>
<path d="M590.5 241.4H602.9" stroke="#a9a7a9" stroke-width="1.1"/>
<path d="M592.5 244.9H600.9" stroke="#a9a7a9" stroke-width="1.1"/>
<path d="M613.5 234.4H625.9" stroke="#a9a7a9" stroke-width="1.1"/>
<path d="M617.5 237.9H625.9" stroke="#a9a7a9" stroke-width="1.1"/>
<path d="M613.5 241.4H625.9" stroke="#a9a7a9" stroke-width="1.1"/>
<path d="M617.5 244.9H625.9" stroke="#a9a7a9" stroke-width="1.1"/>
<path d="M636.5 234.4H648.9" stroke="#a9a7a9" stroke-width="1.1"/>
<path d="M636.5 237.9H648.9" stroke="#a9a7a9" stroke-width="1.1"/>
<path d="M636.5 241.4H648.9" stroke="#a9a7a9" stroke-width="1.1"/>
<path d="M636.5 244.9H648.9" stroke="#a9a7a9" stroke-width="1.1"/>
<path d="M663 237.3H667.8" stroke="#a9a7a9" stroke-width="1.1"/>
<path d="M669.5 237.3H674.3" stroke="#a9a7a9" stroke-width="1.1"/>
<path d="M663 240.3H667.8" stroke="#a9a7a9" stroke-width="1.1"/>
<path d="M669.5 240.3H674.3" stroke="#a9a7a9" stroke-width="1.1"/>
<path d="M663 243.3H667.8" stroke="#a9a7a9" stroke-width="1.1"/>
<path d="M669.5 243.3H674.3" stroke="#a9a7a9" stroke-width="1.1"/>
<path d="M680.9 239.4L683.0 241.6L685.1 239.4" fill="none" stroke="#a9a7a9" stroke-width="1.1" stroke-linecap="round" stroke-linejoin="round"/>
<path d="M725.500 198.500v12.500M723.300 208.800l2.200 2.200 2.200-2.200M732.500 206v5M730.300 208.800l2.200 2.200 2.200-2.200" fill="none" stroke="#a9a7a9" stroke-width="1"/><path d="M729.500 205.500l3-7 3 7M730.500 203h4" fill="none" stroke="#a9a7a9" stroke-width=".9"/>
<path d="M741.8 204.2L744.0 206.5L746.2 204.2" fill="none" stroke="#a9a7a9" stroke-width="1.1" stroke-linecap="round" stroke-linejoin="round"/>
<path d="M725 223h-2.500v9.500h2.500M734 223h2.500v9.500h-2.500" fill="none" stroke="#a9a7a9" stroke-width="1.100"/><path d="M726 227.700h7.300" stroke="#a9a7a9" stroke-width="1.200"/><path d="M729.600 221v5M728 222.500l1.600-1.600 1.600 1.600M729.600 234.500v-5M728 233l1.600 1.600 1.600-1.600" fill="none" stroke="#a9a7a9" stroke-width=".9"/>
<path d="M741.8 227.2L744.0 229.5L746.2 227.2" fill="none" stroke="#a9a7a9" stroke-width="1.1" stroke-linecap="round" stroke-linejoin="round"/>
<path d="M722.500 246h9l-3.500 3.200h-3.500l3 3.800h-5z" fill="#c4c2c4" stroke="#a9a7a9" stroke-width=".8"/><rect x="727.800" y="249.800" width="9" height="6.500" fill="#ffffff" stroke="#a9a7a9" stroke-width="1.100"/><path d="M729.500 252h5.500M729.500 254.300h5.500" stroke="#a9a7a9" stroke-width=".9"/>
<path d="M741.8 250.2L744.0 252.5L746.2 250.2" fill="none" stroke="#a9a7a9" stroke-width="1.1" stroke-linecap="round" stroke-linejoin="round"/>
<path d="M751.5 272.5V267.5H756.5" fill="none" stroke="#bdbbbd" stroke-width="1"/><path d="M753.7 269.7L757.5 273.5M757.5 270.5V273.5H754.5" fill="none" stroke="#bdbbbd" stroke-width="1"/>
<rect x="775.800" y="202.300" width="11.800" height="10.300" fill="#ffffff" stroke="#3f86c9" stroke-width="1.200"/>
<circle cx="775.8" cy="202.3" r="1.100" fill="#dcecf9" stroke="#3f86c9" stroke-width=".7"/>
<circle cx="787.6" cy="202.3" r="1.100" fill="#dcecf9" stroke="#3f86c9" stroke-width=".7"/>
<circle cx="775.8" cy="212.6" r="1.100" fill="#dcecf9" stroke="#3f86c9" stroke-width=".7"/>
<circle cx="787.6" cy="212.6" r="1.100" fill="#dcecf9" stroke="#3f86c9" stroke-width=".7"/>
<path d="M779.600 210.500l2.100-5.700 2.100 5.700M780.400 208.600h2.600" fill="none" stroke="#3f86c9" stroke-width="1.100"/>
<path d="M796 201.200L810 215" stroke="#3c3c3c" stroke-width="1"/>
<path d="M817.200 201.200L830.600 214.400M827 214.800h3.800v-3.800" fill="none" stroke="#3c3c3c" stroke-width="1"/>
<rect x="838.300" y="202.600" width="13.200" height="9.800" fill="#f4f3f6" stroke="#3c3c3c" stroke-width="1"/>
<ellipse cx="866.300" cy="207.500" rx="6.800" ry="5" fill="#f4f3f6" stroke="#3c3c3c" stroke-width="1"/>
<rect x="880.300" y="202.600" width="14.200" height="9.800" rx="2.600" fill="#f4f3f6" stroke="#3c3c3c" stroke-width="1"/>
<path d="M781.700 223.200l6.500 12h-13z" fill="#ffffff" stroke="#3c3c3c" stroke-width="1.100" stroke-linejoin="round"/>
<path d="M796 223.800h6.800v10.600H810" fill="none" stroke="#3c3c3c" stroke-width="1.100"/>
<path d="M817.200 224h6.300v9.800h6.800M828.300 231.800l2 2-2 2" fill="none" stroke="#3c3c3c" stroke-width="1.100"/>
<path d="M838.300 226.300h7v-3l6.500 5.800-6.500 5.800v-3h-7z" fill="#ffffff" stroke="#3c3c3c" stroke-width="1" stroke-linejoin="round"/>
<path d="M863 222.300h6.600v6.500h3l-6.300 6.500-6.300-6.500h3z" fill="#ffffff" stroke="#3c3c3c" stroke-width="1" stroke-linejoin="round"/>
<path d="M880.300 232v-5.500l3.500-3.400h7.200c-1 2.800.8 4.600 3.500 4v4.600a2.600 2.600 0 01-2.600 2.600h-9a2.600 2.600 0 01-2.600-2.300z" fill="#f4f3f6" stroke="#3c3c3c" stroke-width="1" stroke-linejoin="round"/>
<path d="M775.300 244c-.8 4.500 1.300 8.300 5.300 7.500 4.300-.9 6.800-6 5-7.600-1.800-1.600-5.600 1-6.600 5-.9 3.800 1.800 7.200 5.600 6.600 2-.3 3.300-1 3.900-1.900M786.800 251.300l1.800 2-2.600 1.200" fill="none" stroke="#3c3c3c" stroke-width="1" stroke-linecap="round"/>
<path d="M796 244c7 0 13 4.500 13.800 13" fill="none" stroke="#3c3c3c" stroke-width="1"/>
<path d="M817.300 248.500c2.500-5 6-5.500 7.500 0s4 7.500 6 7" fill="none" stroke="#3c3c3c" stroke-width="1"/>
<path d="M847.800 243.300c-2.300 0-2.800.8-2.800 2.500v2c0 1.500-.5 2.200-2 2.400 1.500.2 2 .9 2 2.400v2c0 1.700.5 2.500 2.800 2.500" fill="none" stroke="#3c3c3c" stroke-width="1"/>
<path d="M864.300 243.300c2.300 0 2.800.8 2.800 2.500v2c0 1.500.5 2.200 2 2.400-1.500.2-2 .9-2 2.400v2c0 1.700-.5 2.500-2.800 2.500" fill="none" stroke="#3c3c3c" stroke-width="1"/>
<path d="M887.500 243.800l2 4.800 5.200.3-4 3.300 1.300 5-4.500-2.800-4.500 2.800 1.300-5-4-3.300 5.200-.3z" fill="#ffffff" stroke="#3c3c3c" stroke-width="1" stroke-linejoin="round"/>
<path d="M906.300 225.500h6.200" stroke="#3c3c3c" stroke-width="1"/>
<path d="M906.9 228.0L909.4 230.6L911.9 228.0" fill="none" stroke="#3c3c3c" stroke-width="1.1" stroke-linecap="round" stroke-linejoin="round"/>
<rect x="949.500" y="202.500" width="17.500" height="17" fill="#f6d984" stroke="#e2b445" stroke-width="1.200"/><rect x="946.500" y="199.500" width="10.500" height="10" fill="#f3f2f4" stroke="#3e3e3e" stroke-width="1.300"/><rect x="960.500" y="213.300" width="10.500" height="10" fill="#f3f2f4" stroke="#3e3e3e" stroke-width="1.300"/>
<path d="M955.5 247.6L957.8 250.0L960.1 247.6" fill="none" stroke="#333" stroke-width="1.2" stroke-linecap="round" stroke-linejoin="round"/>
<rect x="1009.300" y="199.800" width="23.500" height="23" fill="#ecebf0" stroke="#cbc9cb" stroke-width="1.300"/><path d="M1034.800 207.500l1.300 1q-4 8.500-10.800 12.500l-2-2.300q7.500-4.700 11.500-11.200z" fill="#b9b7b9"/><path d="M1016.800 223.500q1-5 5.800-5.200 3.200 2 .8 4.400-2.800 1.500-6.600.8z" fill="#bab8ba"/>
<path d="M1033.9 247.4L1036.0 249.6L1038.1 247.4" fill="none" stroke="#a9a7a9" stroke-width="1.1" stroke-linecap="round" stroke-linejoin="round"/>
<path d="M1057.500 203.300l5-4.500 4 4.300-5.300 4.800z" fill="#ffffff" stroke="#a9a7a9" stroke-width="1.100" stroke-linejoin="round"/><path d="M1061 198.300c-2-1-3 .5-2.300 2.500M1067 203.800c1.200 1.500 1 3-.3 3.300" fill="none" stroke="#a9a7a9" stroke-width="1"/><rect x="1054" y="209.500" width="14" height="2.500" fill="#c1bfc1"/>
<path d="M1063 223.500h-7.500v7.800h3" fill="none" stroke="#a9a7a9" stroke-width="1.100"/><path d="M1060 230.500l6.300-7 1.700 1.500-6.300 7-2.500.8z" fill="#ffffff" stroke="#a9a7a9" stroke-width="1" stroke-linejoin="round"/><rect x="1054" y="232.600" width="14" height="2.500" fill="#c1bfc1"/>
<path d="M1057 246.800h10.500l-2.700 6h-10.500z" fill="#f1f0f2" stroke="#a9a7a9" stroke-width="1.100" stroke-linejoin="round"/><path d="M1054.300 252.800v2.500c0 .8 1 1.300 2 1.300h7c1.500 0 2.200-1 2.700-2l1.500-4" fill="#cdcbcd" stroke="#a9a7a9" stroke-width="1" stroke-linejoin="round"/>
<path d="M1154.8 204.4L1157.0 206.8L1159.2 204.4" fill="none" stroke="#a9a7a9" stroke-width="1.1" stroke-linecap="round" stroke-linejoin="round"/>
<path d="M1150.3 227.4L1152.5 229.8L1154.7 227.4" fill="none" stroke="#a9a7a9" stroke-width="1.1" stroke-linecap="round" stroke-linejoin="round"/>
<path d="M1160.8 250.4L1163.0 252.8L1165.2 250.4" fill="none" stroke="#a9a7a9" stroke-width="1.1" stroke-linecap="round" stroke-linejoin="round"/>
<path d="M1171.5 272.5V267.5H1176.5" fill="none" stroke="#bdbbbd" stroke-width="1"/><path d="M1173.7 269.7L1177.5 273.5M1177.5 270.5V273.5H1174.5" fill="none" stroke="#bdbbbd" stroke-width="1"/>
<circle cx="1200.500" cy="202.700" r="4.300" fill="none" stroke="#3a3a3a" stroke-width="1.200"/><path d="M1197.300 205.800l-4.300 4.800" stroke="#3a3a3a" stroke-width="1.200" stroke-linecap="round"/>
<path d="M1196.500 223.500c-2.800 1-3.800 4-2 6.500M1192.800 229.300l1.700 1 1-1.700M1196.500 233.500l2.500-2M1196.500 233.500l-2.300-1.500" fill="none" stroke="#4aa3d8" stroke-width="1.100" stroke-linecap="round"/><path d="M1198.700 220.500v5.700M1198.700 224.800c.5-1.500 3.300-1.500 3.300.5s-2.800 2-3.300.5" fill="none" stroke="#b455b8" stroke-width="1"/><path d="M1205.300 230.800c-1.500-1-3.600-.3-3.600 1.500s2.100 2.500 3.600 1.500" fill="none" stroke="#4aa3d8" stroke-width="1.100"/>
<path d="M1272.2 227.2L1274.5 229.6L1276.8 227.2" fill="none" stroke="#333" stroke-width="1.1" stroke-linecap="round" stroke-linejoin="round"/>
<path d="M1195 245.300v10.500l2.700-2.500 2 4 1.700-.8-2-3.800h3.500z" fill="#ffffff" stroke="#3a3a3a" stroke-width="1.100" stroke-linejoin="round"/>
<path d="M1260.1 250.4L1262.3 252.8L1264.5 250.4" fill="none" stroke="#333" stroke-width="1.1" stroke-linecap="round" stroke-linejoin="round"/>
<rect x="1319.500" y="199.300" width="24.300" height="24.300" fill="#fbeeea" stroke="#c9573f" stroke-width="1.100"/>
<rect x="1322.3" y="202" width="8.200" height="8.200" fill="#fdf6f4" stroke="#c9573f" stroke-width="1"/>
<rect x="1333" y="202" width="8.200" height="8.200" fill="#fdf6f4" stroke="#c9573f" stroke-width="1"/>
<rect x="1322.3" y="212.7" width="8.200" height="8.200" fill="#fdf6f4" stroke="#c9573f" stroke-width="1"/>
<rect x="1333" y="212.7" width="8.200" height="8.200" fill="#fdf6f4" stroke="#c9573f" stroke-width="1"/>
<path d="M1400.3 265.7L1404.3 269.9L1408.3 265.7" fill="none" stroke="#3a3a3a" stroke-width="1.2" stroke-linecap="round" stroke-linejoin="round"/>
<path d="M271.500 290.300l4-5.500 4 5.500z" fill="#6e6e6e"/><path d="M271.500 852.500l4 5.500 4-5.500z" fill="#6e6e6e"/><rect x="272.200" y="756.800" width="7" height="63" rx="3.500" fill="#757575"/>
<path d="M1412 290.300l4.200-5.800 4.200 5.800z" fill="#6e6e6e"/><rect x="1412.500" y="741.600" width="7.600" height="14.700" rx="3.600" fill="#757575"/>
<path d="M1412.300 802.300l4 5.500 4-5.500z" fill="#6e6e6e"/><path d="M1412.300 819l4-5 4 5zM1412.300 824l4-5 4 5z" fill="#6e6e6e"/><path d="M1412.300 829l4 5 4-5zM1412.300 834l4 5 4-5z" fill="#6e6e6e"/>
<path d="M104.500 866.500h5.500v10h-5.500zM110 866.500h5.500v5" fill="none" stroke="#3c3c3c" stroke-width="1.100"/><path d="M111.500 873l5 5M116.500 873l-5 5" stroke="#3c3c3c" stroke-width="1.100"/>
<circle cx="209" cy="865.800" r="1.600" fill="none" stroke="#3c3c3c" stroke-width="1"/><path d="M203.500 869c3.500 1.200 7.500 1.200 11 0M207 870v3.500l-2.300 5M211 870v3.500l1 2" fill="none" stroke="#3c3c3c" stroke-width="1"/><path d="M211 875.300l4.500 4.500M215.500 875.300l-4.500 4.500" stroke="#3c3c3c" stroke-width="1.100"/>
<path d="M938 877.500h11.500M938 874.500h11.500M939.500 871.500h8.500M941 869l2.700-2.700 2.700 2.700" fill="none" stroke="#3c3c3c" stroke-width="1"/>
<path d="M1009.500 866.500h12v8h-7l-3 3v-3h-2z" fill="none" stroke="#3c3c3c" stroke-width="1.100" stroke-linejoin="round"/>
<rect x="1114.500" y="866.800" width="11.500" height="10" fill="none" stroke="#3c3c3c" stroke-width="1.100"/><path d="M1117 869.300h6.500v3h-6.500zM1117 874.500h6.500" fill="none" stroke="#3c3c3c" stroke-width="1"/>
<rect x="1149.5" y="866.8" width="4.800" height="4" fill="none" stroke="#3c3c3c" stroke-width="1"/>
<rect x="1156.3" y="866.8" width="4.800" height="4" fill="none" stroke="#3c3c3c" stroke-width="1"/>
<rect x="1149.5" y="873" width="4.800" height="4" fill="none" stroke="#3c3c3c" stroke-width="1"/>
<rect x="1156.3" y="873" width="4.800" height="4" fill="none" stroke="#3c3c3c" stroke-width="1"/>
<path d="M1190.500 867.500v9.500M1184.500 866.800c2.500-.5 4.500 0 6 .7 1.500-.7 3.500-1.200 6-.7v9.700c-2.500-.5-4.500 0-6 .7-1.500-.7-3.500-1.200-6-.7z" fill="none" stroke="#3c3c3c" stroke-width="1"/><path d="M1186 869.500h3M1186 871.500h3M1186 873.500h3M1192 869.500h3M1192 871.500h3M1192 873.500h3" stroke="#3c3c3c" stroke-width=".7"/>
<path d="M1220 866.300h12.500M1221.300 866.300v6.500h10v-6.500M1226.300 872.800v4.500M1223.300 877.800h6" fill="none" stroke="#3c3c3c" stroke-width="1.100"/>
<path d="M1250 872h6.300" stroke="#3c3c3c" stroke-width="1"/><path d="M1261 872.300h88" stroke="#8a8a8a" stroke-width="1"/><rect x="1305" y="866.500" width="3.800" height="11" fill="#6a6a6a"/><path d="M1353 872h7M1356.500 868.500v7" stroke="#3c3c3c" stroke-width="1"/>
<rect x="1410.800" y="869" width="5" height="6" fill="none" stroke="#3c3c3c" stroke-width="1.100"/><path d="M1411.500 866.500l1.800-1.800 1.800 1.800M1411.500 877.500l1.800 1.800 1.800-1.800M1408.300 870.200l-1.800 1.800 1.800 1.800M1418.300 870.200l1.800 1.800-1.800 1.800" fill="none" stroke="#3c3c3c" stroke-width="1"/>
<path d="M786.500 789.500l0 13 3-2.800 2.300 5 1.800-.8-2.300-5h4.200z" fill="#fff" stroke="#111" stroke-width=".9" stroke-linejoin="round"/><path d="M786.300 784v9M781.800 788.500h9M784.800 785.500l1.500-1.500 1.500 1.500M783.300 787l-1.500 1.500 1.500 1.500M789.300 787l1.500 1.500-1.500 1.500" fill="none" stroke="#222" stroke-width=".8"/>
</svg>
<div class="abs" id="tb"></div><div class="abs" id="tbb"></div>
<svg style="left:0;top:0" width="1446" height="961" viewBox="0 0 1446 961" fill="none" stroke="#fff" stroke-width="2" stroke-linecap="round" stroke-linejoin="round">
<defs><linearGradient id="sp" x1="0" y1="0" x2="1" y2="1"><stop offset="0" stop-color="#ffffff"/><stop offset=".45" stop-color="#cfeaf2"/><stop offset="1" stop-color="#8fc3d6"/></linearGradient></defs>
<!-- participants -->
<circle cx="271.300" cy="904.300" r="3.600"/><circle cx="280.800" cy="907.800" r="3.200"/>
<path d="M274.500 920.200h-5.300c-2.300 0-3.700-1.300-3.600-3.300.1-3 2.500-5 5.800-5 1.600 0 3 .4 4 1.300"/>
<rect x="274.800" y="914.200" width="12" height="6.200" rx="3.100"/>
<path d="M337.500 912.500l4.500-4.500 4.500 4.500" stroke-width="2.200"/>
<!-- chat -->
<path d="M408 901.500c.5-3 2.500-4.500 5.500-4.500h8c3.500 0 5.500 2 5.500 5.500v5.500c0 3-1.300 4.800-4 5.300"/>
<path d="M406.500 902.500h9c3.500 0 5.500 2 5.500 5.500v4c0 3.500-2 5.500-5.500 5.500h-4.500l-4.500 3.800c-.6.500-1 .200-.9-.500l.4-3.700c-2.800-.500-4.500-2.300-4.500-5.100v-4c0-3.500 2-5.500 5.500-5.500z" fill="#000"/>
<g fill="#fff" stroke="none"><circle cx="406.300" cy="910.200" r="1.200"/><circle cx="410.800" cy="910.200" r="1.200"/><circle cx="415.300" cy="910.200" r="1.200"/></g>
<path d="M450.500 912.500l4.500-4.500 4.500 4.500" stroke-width="2.200"/>
<!-- react -->
<path transform="rotate(-13 521 910)" d="M521 921.500l-12.500-9.500c-3-2.500-3.200-7 -.5-9.800 2.800-2.800 7.500-2.700 10.500 1.300 3-4.200 9-5 12.800-2.300 4 2.800 4.500 7.500 1 10.500z"/>
<!-- raise hand -->
<path d="M620.500 911v-10.500a1.700 1.700 0 013.400 0v8M623.900 908.500v-10.200a1.700 1.700 0 013.400 0v10.200M627.300 908.500v-9a1.700 1.700 0 013.400 0v10.500M620.500 908v-5a1.700 1.700 0 00-3.400 0v12c0 5 3.500 8.500 8.500 8.500s7.500-2.800 9-6l3-6.500c.8-1.800-1.800-3.300-3.200-1.300l-3.700 4.300v-5"/>
<path d="M660.500 912.500l4.500-4.500 4.500 4.500" stroke-width="2.200"/>
<!-- share -->
<rect x="726.700" y="897.700" width="30.500" height="24.300" rx="4.500" fill="#22df82" stroke="none"/>
<path d="M742 915.500v-10M737.300 909.300l4.700-4.700 4.700 4.700" stroke="#000" stroke-width="2.600"/>
<!-- AI companion -->
<path d="M861.500 896.500c1.500 8 5 11.500 13.500 13.500-8.500 2-12 5.500-13.500 13.500-1.500-8-5-11.500-13.500-13.500 8.500-2 12-5.500 13.500-13.500z" fill="url(#sp)" stroke="none"/>
<path d="M872.300 894.800c.5 2.500 1.500 3.500 4 4-2.500.5-3.500 1.500-4 4-.5-2.500-1.500-3.500-4-4 2.500-.500 3.500-1.500 4-4z" fill="#d6eef5" stroke="none"/>
<!-- apps -->
<circle cx="978.800" cy="903" r="4.600"/><circle cx="963.300" cy="917" r="4.600"/>
<path d="M968 898.500h-4.500c-3 0-4.800 1.800-4.800 4.800v3.500M984 912.500v3.500c0 3-1.800 4.800-4.800 4.800h-4.500"/>
<!-- notes -->
<path d="M1092.500 912v-11.500c0-2.300-1.300-3.600-3.600-3.600h-14.500c-2.300 0-3.600 1.300-3.600 3.600v18.500c0 2.300 1.300 3.600 3.600 3.600h3.800"/>
<path d="M1076.500 903h10.500M1076.500 907.500h10.500M1076.500 912h6" stroke-width="1.800"/>
<path d="M1068.500 901.500h3M1068.500 905.500h3M1068.500 909.500h3M1068.500 913.500h3M1068.500 917.500h3" stroke-width="1.600"/>
<rect x="1081" y="918.500" width="15.500" height="5.500" rx="2.700" fill="#fff"/>
<!-- whiteboards -->
<path d="M1197.500 919.300h-3.200c-2.300 0-3.600-1.300-3.600-3.600v-13.500c0-2.300 1.300-3.600 3.600-3.600h21.500c2.300 0 3.600 1.300 3.600 3.600v12"/>
<path d="M1199 919.300l4-3.500h13.500a2 2 0 012 2v3a2 2 0 01-2 2H1203z" fill="#fff" stroke-width="1.200"/>
<!-- more -->
<circle cx="1318" cy="910.500" r="13.800"/>
<g fill="#fff" stroke="none"><circle cx="1311.500" cy="910.500" r="1.800"/><circle cx="1318" cy="910.500" r="1.800"/><circle cx="1324.500" cy="910.500" r="1.800"/></g>
</svg>

<span class="L" style="left:148.20px;top:94.72px;font-size:15.4px;color:#ffffff;">Надія Стогній</span>
<span class="L" style="left:325.50px;top:94.72px;font-size:15.4px;color:#ffffff;transform:scaleX(0.9850);">Ірина Вишнева</span>
<span class="L" style="left:549.30px;top:94.72px;font-size:15.4px;color:#ffffff;transform:scaleX(0.9600);">Тетяна Блінова</span>
<span class="L" style="left:748.80px;top:94.72px;font-size:15.4px;color:#ffffff;">Марина Колендовська</span>
<span class="L" style="left:948.80px;top:94.72px;font-size:15.4px;color:#ffffff;transform:scaleX(1.0239);">Вікторія Циганенко</span>
<span class="L" style="left:1148.50px;top:94.72px;font-size:15.4px;color:#ffffff;transform:scaleX(1.0161);">Артем Бронніков</span>
<span class="L" style="left:226.50px;top:17.78px;font-size:14.6px;color:#ffffff;">Unmute</span>
<span class="L" style="left:187.00px;top:137.13px;font-size:11.8px;color:#3a3a3a;transform:scaleX(0.9153);">Інклюзія у вищій освіті.pptx  -  PowerPoint</span>
<span class="L" style="left:598.00px;top:136.64px;font-size:12px;color:#6a6a6a;transform:scaleX(0.9920);">Поиск</span>
<span class="L" style="left:24.00px;top:171.44px;font-size:12px;color:#3b3a3b;transform:scaleX(0.9148);">Файл</span>
<span class="L" style="left:69.00px;top:171.44px;font-size:12px;color:#242424;font-weight:700;transform:scaleX(0.9629);">Главная</span>
<span class="L" style="left:134.00px;top:171.44px;font-size:12px;color:#3b3a3b;transform:scaleX(0.8855);">Вставка</span>
<span class="L" style="left:194.00px;top:171.44px;font-size:12px;color:#3b3a3b;transform:scaleX(0.9183);">Рисование</span>
<span class="L" style="left:270.50px;top:171.44px;font-size:12px;color:#3b3a3b;transform:scaleX(0.9646);">Конструктор</span>
<span class="L" style="left:358.00px;top:171.44px;font-size:12px;color:#3b3a3b;transform:scaleX(0.9681);">Переходы</span>
<span class="L" style="left:434.00px;top:171.44px;font-size:12px;color:#3b3a3b;transform:scaleX(0.9318);">Анимация</span>
<span class="L" style="left:507.00px;top:171.44px;font-size:12px;color:#3b3a3b;transform:scaleX(0.9483);">Слайд-шоу</span>
<span class="L" style="left:585.00px;top:171.44px;font-size:12px;color:#3b3a3b;transform:scaleX(0.9270);">Запись</span>
<span class="L" style="left:642.00px;top:171.44px;font-size:12px;color:#3b3a3b;transform:scaleX(0.9388);">Рецензирование</span>
<span class="L" style="left:750.50px;top:171.44px;font-size:12px;color:#3b3a3b;transform:scaleX(0.8748);">Вид</span>
<span class="L" style="left:788.50px;top:171.44px;font-size:12px;color:#3b3a3b;transform:scaleX(0.9452);">Справка</span>
<span class="L" style="left:1322.80px;top:170.64px;font-size:12px;color:#ffffff;transform:scaleX(0.9327);">Общий доступ</span>
<span class="L" style="left:30.00px;top:229.79px;font-size:11px;color:#2b2b2b;transform:scaleX(0.8919);">Вставить</span>
<span class="L" style="left:32.00px;top:264.09px;font-size:11px;color:#2b2b2b;transform:scaleX(0.9097);">Буфер обмена</span>
<span class="L" style="left:135.00px;top:229.29px;font-size:11px;color:#2b2b2b;transform:scaleX(0.8969);">Создать</span>
<span class="L" style="left:135.00px;top:242.99px;font-size:11px;color:#2b2b2b;transform:scaleX(0.9148);">слайд</span>
<span class="L" style="left:198.00px;top:199.39px;font-size:11px;color:#2b2b2b;transform:scaleX(0.9794);">Макет</span>
<span class="L" style="left:198.00px;top:222.69px;font-size:11px;color:#2b2b2b;transform:scaleX(0.9441);">Восстановить</span>
<span class="L" style="left:198.00px;top:245.49px;font-size:11px;color:#2b2b2b;transform:scaleX(0.9076);">Раздел</span>
<span class="L" style="left:185.50px;top:264.09px;font-size:11px;color:#2b2b2b;transform:scaleX(0.8546);">Слайды</span>
<span class="L" style="left:440.50px;top:205.59px;font-size:11px;color:#9a989a;transform:scaleX(0.9796);">18</span>
<span class="L" style="left:394.00px;top:264.09px;font-size:11px;color:#2b2b2b;transform:scaleX(0.9391);">Шрифт</span>
<span class="L" style="left:637.50px;top:264.09px;font-size:11px;color:#2b2b2b;transform:scaleX(0.9235);">Абзац</span>
<span class="L" style="left:926.50px;top:229.79px;font-size:11px;color:#2b2b2b;transform:scaleX(0.9776);">Упорядочить</span>
<span class="L" style="left:996.00px;top:229.79px;font-size:11px;color:#b4b2b4;transform:scaleX(0.9667);">Экспресс-</span>
<span class="L" style="left:1002.50px;top:243.09px;font-size:11px;color:#b4b2b4;transform:scaleX(0.9402);">стили</span>
<span class="L" style="left:939.00px;top:264.09px;font-size:11px;color:#2b2b2b;transform:scaleX(0.9024);">Рисование</span>
<span class="L" style="left:1071.00px;top:199.39px;font-size:11px;color:#b4b2b4;transform:scaleX(0.9582);">Заливка фигуры</span>
<span class="L" style="left:1071.00px;top:222.69px;font-size:11px;color:#b4b2b4;transform:scaleX(0.9815);">Контур фигуры</span>
<span class="L" style="left:1071.00px;top:245.49px;font-size:11px;color:#b4b2b4;transform:scaleX(0.9381);">Эффекты фигуры</span>
<span class="L" style="left:1210.50px;top:199.39px;font-size:11px;color:#2b2b2b;transform:scaleX(0.9238);">Найти</span>
<span class="L" style="left:1210.00px;top:222.69px;font-size:11px;color:#2b2b2b;transform:scaleX(0.9406);">Заменить</span>
<span class="L" style="left:1210.50px;top:245.49px;font-size:11px;color:#2b2b2b;transform:scaleX(0.9064);">Выделить</span>
<span class="L" style="left:1198.50px;top:264.09px;font-size:11px;color:#2b2b2b;transform:scaleX(0.9249);">Редактирование</span>
<span class="L" style="left:1302.50px;top:229.29px;font-size:11px;color:#2b2b2b;transform:scaleX(0.9526);">Надстройки</span>
<span class="L" style="left:1303.50px;top:264.09px;font-size:11px;color:#2b2b2b;transform:scaleX(0.9195);">Надстройки</span>
<span class="L" style="left:14.00px;top:283.22px;font-size:13.5px;color:#4a484a;transform:scaleX(0.8981);">32</span>
<span class="L" style="left:14.00px;top:419.22px;font-size:13.5px;color:#4a484a;transform:scaleX(0.8981);">33</span>
<span class="L" style="left:14.00px;top:555.72px;font-size:13.5px;color:#b7473a;transform:scaleX(0.8981);">34</span>
<span class="L" style="left:14.00px;top:691.22px;font-size:13.5px;color:#4a484a;transform:scaleX(0.8981);">35</span>
<span class="L" style="left:14.00px;top:827.22px;font-size:13.5px;color:#4a484a;transform:scaleX(0.8981);">36</span>
<span class="L" style="left:21.00px;top:866.09px;font-size:11px;color:#3c3c3c;transform:scaleX(0.8604);">Слайд 34 из 37</span>
<span class="L" style="left:133.50px;top:866.09px;font-size:11px;color:#3c3c3c;transform:scaleX(0.9760);">украинский</span>
<span class="L" style="left:219.50px;top:866.09px;font-size:11px;color:#222;transform:scaleX(0.9626);">Специальные возможности: проверьте рекомендации</span>
<span class="L" style="left:953.00px;top:866.09px;font-size:11px;color:#3c3c3c;transform:scaleX(0.9387);">Заметки</span>
<span class="L" style="left:1025.00px;top:866.09px;font-size:11px;color:#3c3c3c;transform:scaleX(0.9604);">Примечания</span>
<span class="L" style="left:1372.50px;top:866.09px;font-size:11px;color:#3c3c3c;transform:scaleX(0.8782);">115%</span>
<span class="L" style="left:236.50px;top:932.05px;font-size:14px;color:#ffffff;font-weight:700;transform:scaleX(0.9945);">Participants</span>
<span class="L" style="left:399.50px;top:932.05px;font-size:14px;color:#ffffff;font-weight:700;transform:scaleX(0.9799);">Chat</span>
<span class="L" style="left:503.00px;top:932.05px;font-size:14px;color:#ffffff;font-weight:700;transform:scaleX(0.9701);">React</span>
<span class="L" style="left:589.50px;top:932.05px;font-size:14px;color:#ffffff;font-weight:700;transform:scaleX(0.9772);">Raise hand</span>
<span class="L" style="left:723.50px;top:932.05px;font-size:14px;color:#ffffff;font-weight:700;transform:scaleX(0.9892);">Share</span>
<span class="L" style="left:814.30px;top:932.05px;font-size:14px;color:#ffffff;font-weight:700;transform:scaleX(1.0149);">AI Companion</span>
<span class="L" style="left:954.50px;top:932.05px;font-size:14px;color:#ffffff;font-weight:700;transform:scaleX(0.9714);">Apps</span>
<span class="L" style="left:1062.50px;top:932.05px;font-size:14px;color:#ffffff;font-weight:700;transform:scaleX(1.0153);">Notes</span>
<span class="L" style="left:1162.40px;top:932.05px;font-size:14px;color:#ffffff;font-weight:700;transform:scaleX(1.0215);">Whiteboards</span>
<span class="L" style="left:1299.50px;top:932.05px;font-size:14px;color:#ffffff;font-weight:700;transform:scaleX(1.0911);">More</span>
<span class="L" style="left:297.50px;top:900.55px;font-size:14px;color:#bdbdbd;font-weight:700;transform:scaleX(0.8666);">18</span>
<span class="L" style="left:291.00px;top:232.64px;font-size:12px;color:#8e8c8e;font-weight:700;transform:scaleX(1.1050);">Ж</span>
<span class="L" style="left:316.50px;top:232.64px;font-size:12px;color:#a5a3a5;font-style:italic;transform:scaleX(1.1302);">К</span>
<span class="L" style="left:339.50px;top:232.64px;font-size:12px;color:#a5a3a5;transform:scaleX(0.9375);text-decoration:underline;text-underline-offset:2px;">Ч</span>
<span class="L" style="left:362.50px;top:232.47px;font-size:12.5px;color:#9a989a;font-weight:700;transform:scaleX(0.8390);">S</span>
<span class="L" style="left:383.50px;top:233.59px;font-size:11px;color:#a5a3a5;transform:scaleX(0.8980);text-decoration:line-through;">ab</span>
<span class="L" style="left:405.50px;top:231.84px;font-size:10px;color:#a5a3a5;transform:scaleX(1.0310);">AV</span>
<span class="L" style="left:442.50px;top:232.64px;font-size:12px;color:#a5a3a5;transform:scaleX(0.8989);letter-spacing:1px;">Aa</span>
</body></html>
